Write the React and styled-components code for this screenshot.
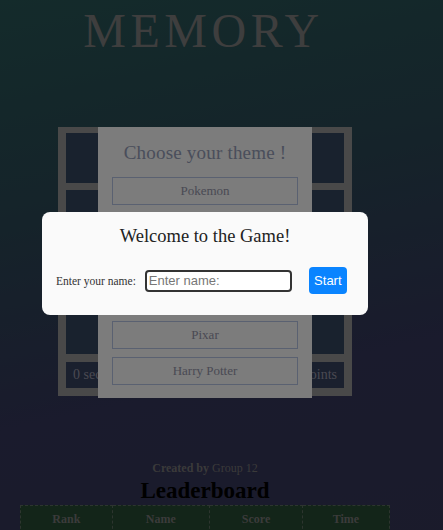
import React from 'react';
import styled, { createGlobalStyle } from 'styled-components';

const themes = ['Pokemon', 'Disney', 'Marvel', 'Star Wars', 'Pixar', 'Harry Potter'];
const cells = Array.from({ length: 16 }, (_, i) => i);

const GlobalStyle = createGlobalStyle`
  html, body { margin: 0; padding: 0; }
  body {
    min-height: 100vh;
    font-family: "Liberation Serif", "Times New Roman", serif;
    background: linear-gradient(168deg, #285656 0%, #2a4854 30%, #34365a 62%, #363656 100%);
  }
`;

const App = () => {
  return (
    <>
      <GlobalStyle />
      <Page>
        <Title>MEMORY</Title>

        <BoardWrap>
          <Board>
            <Grid>
              {cells.map((c) => <Cell key={c} />)}
            </Grid>
            <ScoreBar>
              <span>0 sec</span>
              <span>0 points</span>
            </ScoreBar>
          </Board>

          <ThemePanel>
            <ThemeTitle>Choose your theme !</ThemeTitle>
            <ThemeList>
              {themes.map((t) => <ThemeButton key={t}>{t}</ThemeButton>)}
            </ThemeList>
          </ThemePanel>
        </BoardWrap>

        <Credit><b>Created by</b> Group 12</Credit>
        <LeaderTitle>Leaderboard</LeaderTitle>
        <Table>
          <thead>
            <tr>
              <Th>Rank</Th>
              <Th>Name</Th>
              <Th>Score</Th>
              <Th>Time</Th>
            </tr>
          </thead>
          <tbody>
            <tr><Td>1</Td><Td>-</Td><Td>-</Td><Td>-</Td></tr>
          </tbody>
        </Table>
      </Page>

      <Overlay />

      <Welcome>
        <WelcomeTitle>Welcome to the Game!</WelcomeTitle>
        <NameRow>
          <Label>Enter your name:</Label>
          <NameInput placeholder="Enter name:" />
          <StartButton>Start</StartButton>
        </NameRow>
      </Welcome>
    </>
  );
};

export default App;

const Page = styled.div`
  width: 410px;
  display: flex; flex-direction: column; align-items: center;
  padding-bottom: 40px;
`;

const Title = styled.h1`
  margin: 7px 0 0 0;
  font-size: 48px; line-height: 48px; font-weight: 400;
  letter-spacing: 4.5px; padding-right: 3px;
  color: #7c7c7c;
`;

const BoardWrap = styled.div` position: relative; margin-top: 72px; `;

const Board = styled.div`
  width: 294px; box-sizing: border-box;
  padding: 6px 8px 8px;
  background: #929292;
`;

const Grid = styled.div`
  display: grid; grid-template-columns: repeat(4, 1fr);
  grid-auto-rows: 50px; gap: 7px;
`;

const Cell = styled.div` background: #32445c; `;

const ScoreBar = styled.div`
  margin-top: 8px; height: 26px;
  background: #34405c;
  display: flex; align-items: center; justify-content: space-between;
  padding: 0 7px; color: #9494a4; font-size: 14px;
`;

const ThemePanel = styled.div`
  position: absolute; left: 40px; top: 0; bottom: -2px;
  width: 214px; box-sizing: border-box;
  padding: 14px 14px 13px;
  background: #f8f8f8;
`;

const ThemeTitle = styled.h2`
  margin: 0; font-size: 19px; line-height: 24px; font-weight: 400;
  text-align: center; color: #949cb6; letter-spacing: 0.2px;
`;

const ThemeList = styled.div`
  margin-top: 12px;
  display: flex; flex-direction: column; gap: 8px;
`;

const ThemeButton = styled.button`
  height: 28px; width: 100%;
  background: transparent; border: 1px solid #b4c2e2;
  font-family: "Liberation Serif", serif; font-size: 13px; color: #9494a8;
`;

const Credit = styled.p`
  margin: 64px 0 0; font-size: 12px; line-height: 16px; color: #747474;
`;

const LeaderTitle = styled.h2`
  margin: 2px 0 0; font-size: 23px; line-height: 26px; font-weight: 700; color: #000;
`;

const Table = styled.table`
  margin-top: 1px; width: 370px; border-collapse: collapse;
  background: #264a32;
`;

const Th = styled.th`
  border: 1px dashed #5a6a5e; height: 25px;
  font-size: 12px; color: #767676;
`;

const Td = styled.td`
  border: 1px dashed #5a6a5e; height: 25px; text-align: center;
  font-size: 12px; color: #767676;
`;

const Overlay = styled.div`
  position: fixed; inset: 0; background: rgba(0, 0, 0, 0.5);
`;

const Welcome = styled.div`
  position: fixed; left: 42px; top: 212px;
  width: 326px; height: 103px; box-sizing: border-box;
  padding: 13px 21px 0 14px;
  background: #fafafa; border-radius: 8px;
`;

const WelcomeTitle = styled.h2`
  margin: 0; font-size: 18.5px; line-height: 22px; font-weight: 400;
  text-align: center; color: #222; padding-left: 7px;
`;

const NameRow = styled.div`
  margin-top: 20px; display: flex; align-items: center;
`;

const Label = styled.label`
  font-size: 11.5px; color: #333; margin-right: 9px;
  white-space: nowrap; flex-shrink: 0;
`;

const NameInput = styled.input`
  width: 147px; height: 22px; box-sizing: border-box; flex-shrink: 0;
  border: 2px solid #333; border-radius: 4px; padding: 0 2px;
  font-family: "Liberation Sans", Arial, sans-serif; font-size: 13px;
  background: #fff;
  &::placeholder { color: #777; }
`;

const StartButton = styled.button`
  margin-left: 17px; width: 38px; height: 27px; flex-shrink: 0;
  border: none; border-radius: 4px;
  background: #0a84ff; color: #fff;
  font-family: "Liberation Sans", Arial, sans-serif; font-size: 13px;
  padding: 0;
`;
